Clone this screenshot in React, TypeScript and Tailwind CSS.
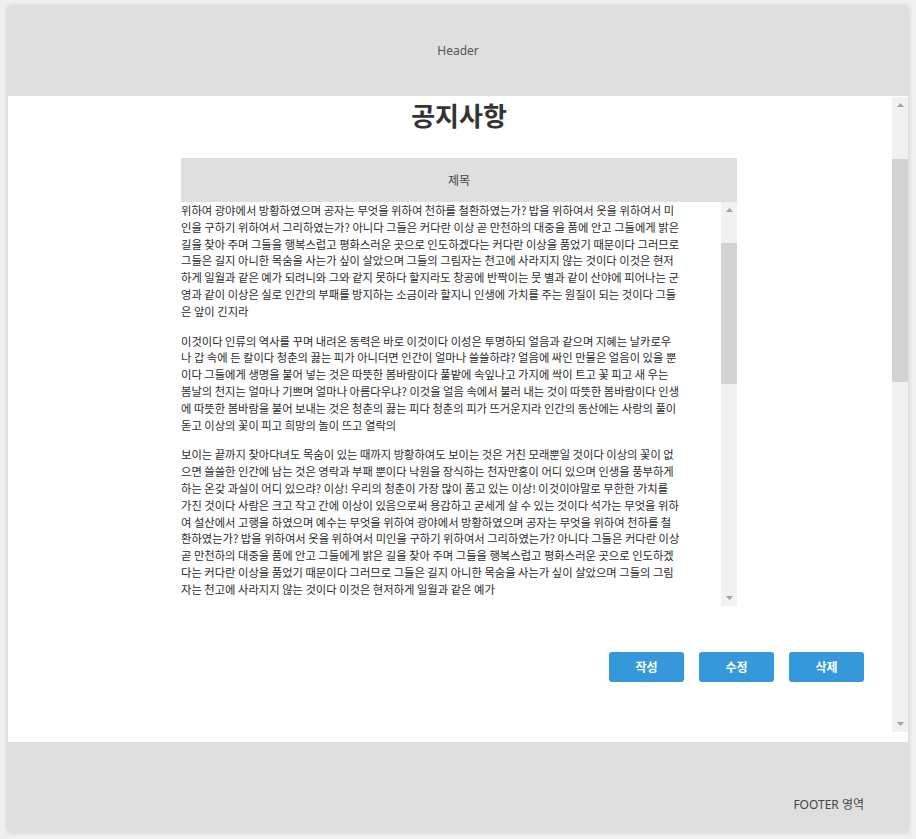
const paragraphs: string[][] = [
  [
    "위하여 광야에서 방황하였으며 공자는 무엇을 위하여 천하를 철환하였는가? 밥을 위하여서 옷을 위하여서 미",
    "인을 구하기 위하여서 그리하였는가? 아니다 그들은 커다란 이상 곧 만천하의 대중을 품에 안고 그들에게 밝은",
    "길을 찾아 주며 그들을 행복스럽고 평화스러운 곳으로 인도하겠다는 커다란 이상을 품었기 때문이다 그러므로",
    "그들은 길지 아니한 목숨을 사는가 싶이 살았으며 그들의 그림자는 천고에 사라지지 않는 것이다 이것은 현저",
    "하게 일월과 같은 예가 되려니와 그와 같지 못하다 할지라도 창공에 반짝이는 뭇 별과 같이 산야에 피어나는 군",
    "영과 같이 이상은 실로 인간의 부패를 방지하는 소금이라 할지니 인생에 가치를 주는 원질이 되는 것이다 그들",
    "은 앞이 긴지라",
  ],
  [
    "이것이다 인류의 역사를 꾸며 내려온 동력은 바로 이것이다 이성은 투명하되 얼음과 같으며 지혜는 날카로우",
    "나 갑 속에 든 칼이다 청춘의 끓는 피가 아니더면 인간이 얼마나 쓸쓸하랴? 얼음에 싸인 만물은 얼음이 있을 뿐",
    "이다 그들에게 생명을 불어 넣는 것은 따뜻한 봄바람이다 풀밭에 속잎나고 가지에 싹이 트고 꽃 피고 새 우는",
    "봄날의 천지는 얼마나 기쁘며 얼마나 아름다우냐? 이것을 얼음 속에서 불러 내는 것이 따뜻한 봄바람이다 인생",
    "에 따뜻한 봄바람을 불어 보내는 것은 청춘의 끓는 피다 청춘의 피가 뜨거운지라 인간의 동산에는 사랑의 풀이",
    "돋고 이상의 꽃이 피고 희망의 놀이 뜨고 열락의",
  ],
  [
    "보이는 끝까지 찾아다녀도 목숨이 있는 때까지 방황하여도 보이는 것은 거친 모래뿐일 것이다 이상의 꽃이 없",
    "으면 쓸쓸한 인간에 남는 것은 영락과 부패 뿐이다 낙원을 장식하는 천자만홍이 어디 있으며 인생을 풍부하게",
    "하는 온갖 과실이 어디 있으랴? 이상! 우리의 청춘이 가장 많이 품고 있는 이상! 이것이야말로 무한한 가치를",
    "가진 것이다 사람은 크고 작고 간에 이상이 있음으로써 용감하고 굳세게 살 수 있는 것이다 석가는 무엇을 위하",
    "여 설산에서 고행을 하였으며 예수는 무엇을 위하여 광야에서 방황하였으며 공자는 무엇을 위하여 천하를 철",
    "환하였는가? 밥을 위하여서 옷을 위하여서 미인을 구하기 위하여서 그리하였는가? 아니다 그들은 커다란 이상",
    "곧 만천하의 대중을 품에 안고 그들에게 밝은 길을 찾아 주며 그들을 행복스럽고 평화스러운 곳으로 인도하겠",
    "다는 커다란 이상을 품었기 때문이다 그러므로 그들은 길지 아니한 목숨을 사는가 싶이 살았으며 그들의 그림",
    "자는 천고에 사라지지 않는 것이다 이것은 현저하게 일월과 같은 예가",
  ],
];

function Arrow({ down }: { down?: boolean }) {
  return (
    <div className="h-4 flex items-center justify-center">
      <svg width="7" height="4" viewBox="0 0 7 4">
        <polygon points={down ? "0,0 7,0 3.5,4" : "3.5,0 7,4 0,4"} fill="#a3a3a3" />
      </svg>
    </div>
  );
}

// 스크롤바 모양 (thumb 위치는 고정값)
function Scrollbar({ className, thumb }: { className: string; thumb: string }) {
  return (
    <div className={`w-4 shrink-0 flex flex-col bg-[#f1f1f1] ${className}`}>
      <Arrow />
      <div className="flex-1">
        <div className={`bg-[#d3d3d3] ${thumb}`} />
      </div>
      <Arrow down />
    </div>
  );
}

export default function App() {
  return (
    <div className="min-h-screen bg-[#f0f0f0] px-2 pt-[6px] font-['Noto_Sans','Noto_Sans_CJK_KR',sans-serif]">
      <div className="w-[900px] shadow-[0_0_5px_rgba(0,0,0,0.18)]">
        {/* Header */}
        <header className="h-[90px] bg-[#dfdfdf] flex items-center justify-center text-xs text-[#555]">
          Header
        </header>

        {/* Content */}
        <main className="h-[646px] bg-white flex">
          <div className="w-[884px] h-[636px] overflow-hidden">
            <div className="w-[902px] pt-px">
              <h2 className="text-center text-[26px] leading-[36px] font-bold text-[#333] font-['Noto_Sans_CJK_KR',sans-serif]">
                공지사항
              </h2>

              <div className="mx-auto mt-[25px] w-[556px]">
                <div className="h-[44px] bg-[#dfdfdf] flex items-center justify-center text-xs text-[#444] font-['Noto_Sans_CJK_KR',sans-serif]">
                  제목
                </div>
                <div className="flex h-[404px]">
                  <div className="w-[540px] overflow-hidden text-[11.3px] leading-[16.8px] text-[#2b2b2b] font-['Noto_Sans_CJK_KR',sans-serif]">
                    {paragraphs.map((lines, i) => (
                      <p key={i} className="mb-[13px]">
                        {lines.map((line, j) => (
                          <span key={j} className="block whitespace-nowrap">
                            {line}
                          </span>
                        ))}
                      </p>
                    ))}
                  </div>
                  <Scrollbar className="h-[404px]" thumb="mt-[25px] h-[141px]" />
                </div>
              </div>

              <div className="mt-[46px] flex justify-end gap-[15px] pr-[46px]">
                {["작성", "수정", "삭제"].map((label) => (
                  <button
                    key={label}
                    className="w-[75px] h-[30px] rounded-[3px] bg-[#3498db] text-white text-xs font-bold font-['Noto_Sans_CJK_KR',sans-serif]"
                  >
                    {label}
                  </button>
                ))}
              </div>
            </div>
          </div>
          <Scrollbar className="mt-px h-[635px]" thumb="mt-[46px] h-[223px]" />
        </main>

        {/* Footer */}
        <footer className="h-[90px] bg-[#dfdfdf] flex items-end justify-end pr-[44px] pb-[19px] text-xs text-[#444]">
          FOOTER 영역
        </footer>
      </div>
    </div>
  );
}
